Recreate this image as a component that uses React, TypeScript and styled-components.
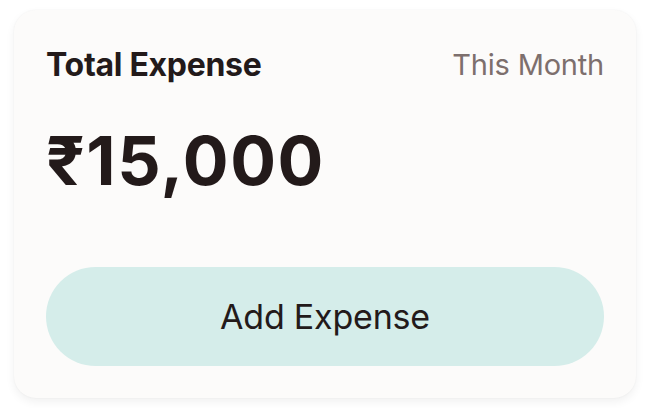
import React from "react";
import styled, { createGlobalStyle } from "styled-components";

const GlobalStyle = createGlobalStyle`
  body {
    margin: 0;
    background: #ffffff;
    font-family: Inter, "Noto Sans", sans-serif;
  }
`;

const Page = styled.div`
  padding: 10px 14px;
`;

const Card = styled.div`
  width: 622px;
  height: 388px;
  box-sizing: border-box;
  padding: 30px 32px 32px;
  background: #fcfbfa;
  border-radius: 22px;
  box-shadow: 0 4px 10px rgba(0, 0, 0, 0.06), 0 0 2px rgba(0, 0, 0, 0.05);
  display: flex;
  flex-direction: column;
`;

const Header = styled.div`
  display: flex;
  justify-content: space-between;
  align-items: center;
  height: 48px;
`;

const Title = styled.div`
  font-size: 32px;
  font-weight: 700;
  letter-spacing: -0.3px;
  color: #231a1a;
`;

const Period = styled.div`
  font-size: 29px;
  font-weight: 400;
  letter-spacing: -0.2px;
  color: #7d6f6d;
`;

const Amount = styled.div`
  margin-top: 32px;
  font-size: 68px;
  font-weight: 700;
  letter-spacing: 1.5px;
  line-height: 80px;
  color: #231a1a;
`;

const AddButton = styled.button`
  margin-top: auto;
  height: 99px;
  width: 100%;
  border: none;
  border-radius: 50px;
  background: #d5edea;
  color: #231a1a;
  font-family: Inter, "Noto Sans", sans-serif;
  font-size: 34px;
  font-weight: 400;
  letter-spacing: -0.2px;
  cursor: pointer;
`;

export default function App() {
  return (
    <>
      <GlobalStyle />
      <Page>
        <Card>
          <Header>
            <Title>Total Expense</Title>
            <Period>This Month</Period>
          </Header>
          <Amount>₹15,000</Amount>
          <AddButton>Add Expense</AddButton>
        </Card>
      </Page>
    </>
  );
}
